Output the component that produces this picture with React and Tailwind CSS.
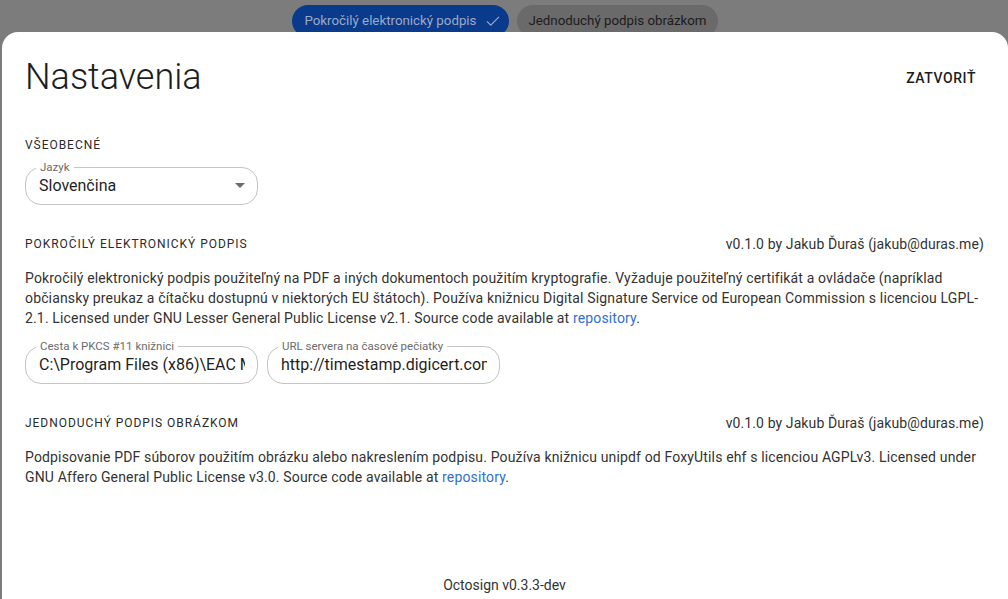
import { useState } from 'react';

const Field = ({ label, value, className = '' }) => {
  return (
    <div className={`relative h-[38px] rounded-2xl border border-[#c4c4c4] flex items-center pl-[13px] pr-3 ${className}`}>
      <span className="absolute -top-[8px] left-[10px] bg-white px-[4px] text-[11.5px] leading-[14px] text-[#6b6b6b]">
        {label}
      </span>
      <span className="text-[16px] text-[#1f1f1f] whitespace-nowrap overflow-hidden">{value}</span>
    </div>
  );
};

const SectionHeader = ({ title, author }) => (
  <div className="flex items-center justify-between h-[16px]">
    <h2 className="text-[12px] leading-[16px] tracking-[0.08em] text-[#2b2b2b]">{title}</h2>
    {author && <span className="text-[14px] leading-[16px] tracking-[0.1px] text-[#333]">{author}</span>}
  </div>
);

const App = () => {
  const [lang] = useState('Slovenčina');

  return (
    <div
      className="h-[599px] w-[1008px] overflow-hidden bg-[#7c7c7c] flex flex-col"
      style={{ fontFamily: 'Roboto, "Noto Sans", sans-serif' }}
    >
      {/* tabs behind the overlay */}
      <div className="flex justify-center gap-[8px] pt-[5px] h-[32px] pl-[2px]">
        <div className="h-[32px] rounded-full bg-[#0a3a8c] flex items-center gap-[8px] pl-[12px] pr-[7px] text-[13.3px] text-[#9aaac6]">
          Pokročilý elektronický podpis
          <svg width="18" height="18" viewBox="0 0 24 24" fill="none" stroke="#9aaac6" strokeWidth="1.6">
            <path d="M4 12.5l5 5L20 6.5" />
          </svg>
        </div>
        <div className="h-[32px] rounded-full bg-[#6a6a6a] flex items-center px-[11px] text-[13.3px] text-[#1c1c1c]">
          Jednoduchý podpis obrázkom
        </div>
      </div>

      <main className="relative flex-1 ml-[2px] bg-white rounded-t-2xl pl-[23px] pr-[24px] flex flex-col">
        <header className="flex items-center justify-between pt-[23px]">
          <h1 className="text-[36px] leading-[44px] font-light text-[#1d1d1d]">Nastavenia</h1>
          <button className="text-[14px] font-medium tracking-[0.04em] text-[#1d1d1d] mr-[8px] mt-[2px]">
            ZATVORIŤ
          </button>
        </header>

        <section className="mt-[38px]">
          <SectionHeader title="VŠEOBECNÉ" />
          <div className="mt-[14px] w-[233px] relative">
            <Field label="Jazyk" value={lang} />
            <svg className="absolute right-[13px] top-[16px]" width="10" height="5" viewBox="0 0 10 5">
              <path d="M0 0h10L5 5z" fill="#6b6b6b" />
            </svg>
          </div>
        </section>

        <section className="mt-[31px]">
          <SectionHeader
            title="POKROČILÝ ELEKTRONICKÝ PODPIS"
            author="v0.1.0 by Jakub Ďuraš (jakub@duras.me)"
          />
          <p className="mt-[16px] text-[14px] leading-[20px] tracking-[0.15px] text-[#333]">
            Pokročilý elektronický podpis použiteľný na PDF a iných dokumentoch použitím kryptografie. Vyžaduje
            použiteľný certifikát a ovládače (napríklad občiansky preukaz a čítačku dostupnú v niektorých EU
            štátoch). Používa knižnicu Digital Signature Service od European Commission s licenciou LGPL-2.1.
            Licensed under GNU Lesser General Public License v2.1. Source code available at{' '}
            <a className="text-[#2f6fd6]">repository</a>.
          </p>
          <div className="mt-[18px] flex gap-[9px]">
            <Field className="w-[233px]" label="Cesta k PKCS #11 knižnici" value="C:\Program Files (x86)\EAC MW klient\pkcs11_x64.dll" />
            <Field className="w-[233px]" label="URL servera na časové pečiatky" value="http://timestamp.digicert.com" />
          </div>
        </section>

        <section className="mt-[31px]">
          <SectionHeader title="JEDNODUCHÝ PODPIS OBRÁZKOM" author="v0.1.0 by Jakub Ďuraš (jakub@duras.me)" />
          <p className="mt-[16px] text-[14px] leading-[20px] tracking-[0.15px] text-[#333]">
            Podpisovanie PDF súborov použitím obrázku alebo nakreslením podpisu. Používa knižnicu unipdf od
            FoxyUtils ehf s licenciou AGPLv3. Licensed under GNU Affero General Public License v3.0. Source code
            available at <a className="text-[#2f6fd6]">repository</a>.
          </p>
        </section>

        <footer className="mt-[88px] text-center text-[14px] leading-[20px] text-[#333]">Octosign v0.3.3-dev</footer>
      </main>
    </div>
  );
};

export default App;
